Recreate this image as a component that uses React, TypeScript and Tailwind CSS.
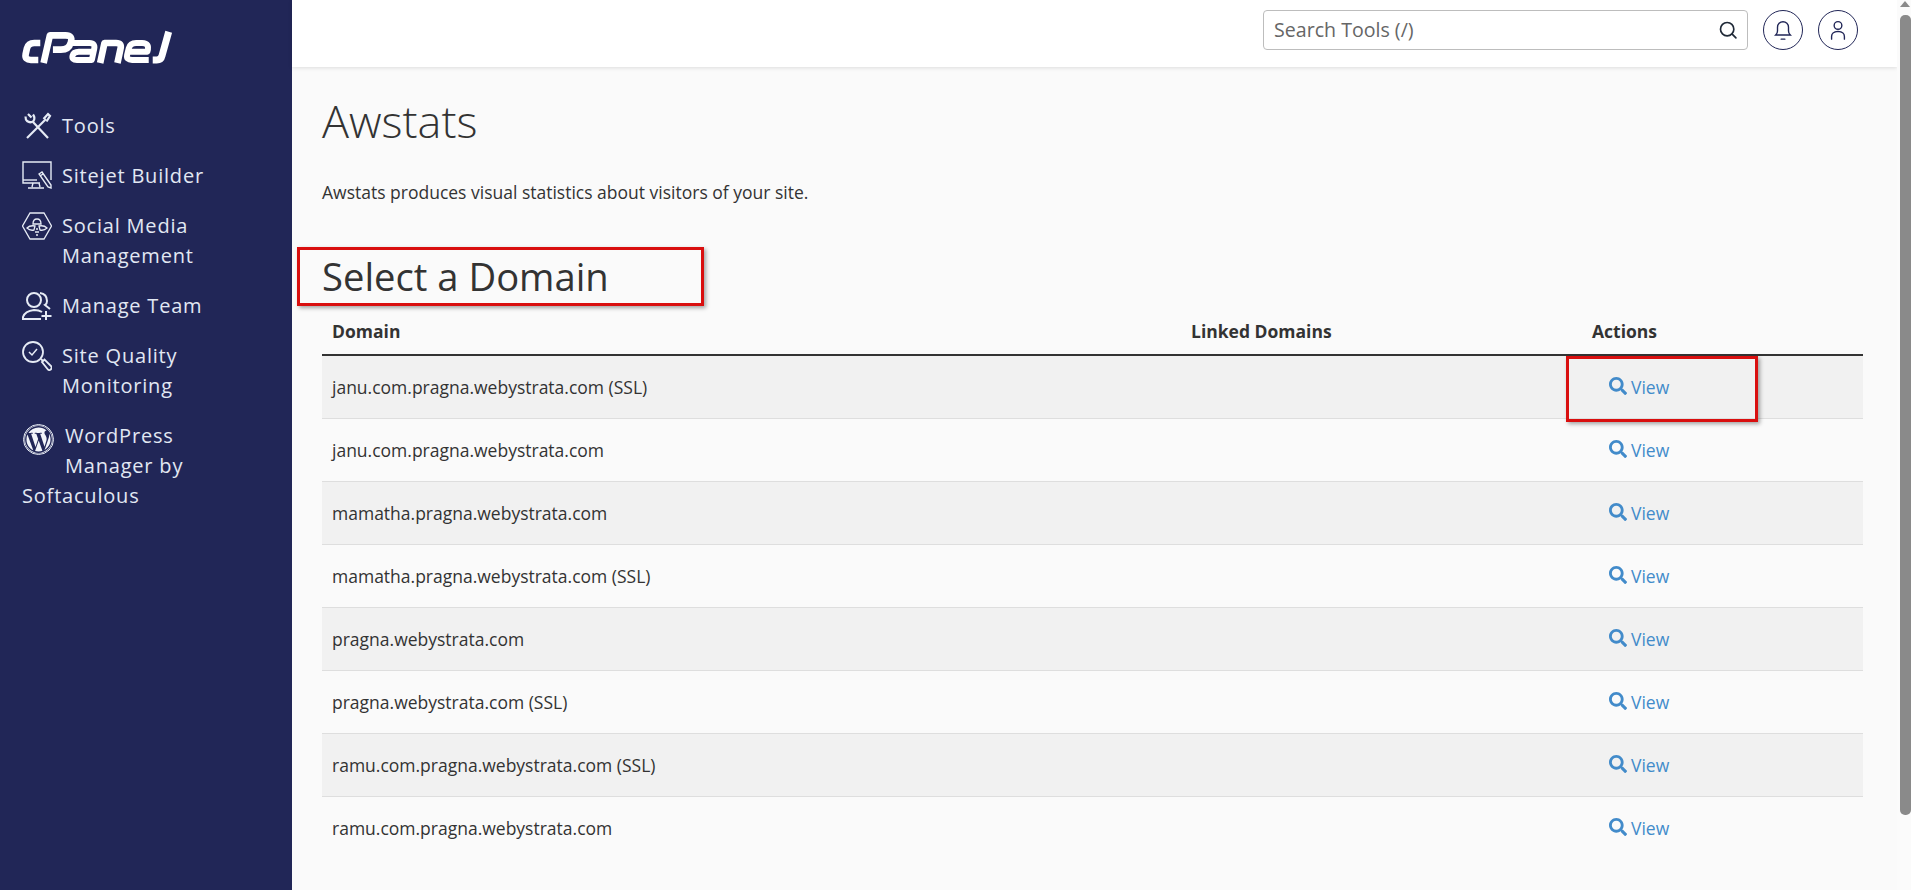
import React from "react";
import { FaSearch, FaWordpress } from "react-icons/fa";

const stroke = "#e6ebf5";

function Logo() {
  return (
    <svg viewBox="0 0 496 135" className="h-[45px] w-[165px] block" fill="none" stroke="#fff" strokeWidth="18" strokeLinejoin="round">
      <path d="M76 54 H58 Q40 54 36 70 L32 88 Q29 105 48 105 H70" strokeWidth="20" />
      <path d="M86 114 L105 31 H152 Q174 31 168 52 Q162 74 138 74 H114" strokeWidth="20" />
      <path d="M174 54 H224 Q242 54 238 72 L231 105 H186 Q170 105 173 92 Q176 80 192 80 H234" />
      <path d="M256 114 L269 54 H304 Q322 54 317 72 L308 114" strokeWidth="20" />
      <path d="M344 80 H398 Q406 54 382 54 H364 Q346 54 342 70 L337 90 Q334 105 352 105 H402" />
      <path d="M462 20 L442 92 Q439 105 426 105 H414" strokeWidth="21" />
    </svg>
  );
}

function ToolsIcon() {
  return (
    <svg viewBox="0 0 30 30" className="w-[30px] h-[30px] block" fill="none" stroke={stroke} strokeWidth="2.2">
      <path d="M5 27 L24 8" />
      <path d="M21.5 8 L26 3 L28 5 L24.5 10.5" />
      <path d="M11 11 L26 27" />
      <path d="M6 3 L9.5 6.5 M11 3.5 Q13.5 7 11.5 10 Q8.5 12.5 5 10 Q3.5 8.5 3.5 5.5" />
    </svg>
  );
}
function SitejetIcon() {
  return (
    <svg viewBox="0 0 30 30" className="w-[30px] h-[30px] block" fill="none" stroke={stroke} strokeWidth="1.4">
      <path d="M18 22 H1 V1 H29 V19" />
      <path d="M1 19 H15" />
      <path d="M11 22 L10 26 M17 22 L18 26 M6 27 H22" />
      <path d="M17 13 L20 11 L29 24 L29 27 L26 26 Z M18 15 L21 13" />
    </svg>
  );
}
function SocialIcon() {
  return (
    <svg viewBox="0 0 30 30" className="w-[30px] h-[30px] block" fill="none" stroke={stroke} strokeWidth="1.3">
      <path d="M8 2 H22 L29.5 15 L22 28 H8 L0.5 15 Z" />
      <path d="M11 13 Q11 8 15 8 Q19 8 19 13 Z" />
      <path d="M5 17 Q8 14 13 15 L12 19 Q8 20 5 17 Z M25 17 Q22 14 17 15 L18 19 Q22 20 25 17 Z" />
      <path d="M14 18 H16 M13 21 H17 M14 24 H16" />
    </svg>
  );
}
function TeamIcon() {
  return (
    <svg viewBox="0 0 30 30" className="w-[30px] h-[30px] block" fill="none" stroke={stroke} strokeWidth="2">
      <circle cx="12" cy="9" r="7" />
      <path d="M18 2 Q25 3 25 10 Q25 13 23 14 L28 18" />
      <path d="M1 29 V26 Q3 20 12 19 Q17 19 20 21 M1 28 H19" />
      <path d="M24 20 V29 M19.5 25 H29.5" />
    </svg>
  );
}
function QualityIcon() {
  return (
    <svg viewBox="0 0 30 30" className="w-[30px] h-[30px] block" fill="none" stroke={stroke} strokeWidth="1.8">
      <circle cx="11" cy="11" r="10" />
      <path d="M7 11 L10 14 L15 8" strokeWidth="1.5" />
      <path d="M19 18 L21 20 M20 21 L22.5 18.5 L29.5 25.5 Q30 28 28 29 Q26.5 29.5 25.5 28 Z" />
    </svg>
  );
}
function BellIcon() {
  return (
    <svg viewBox="0 0 24 24" className="w-[22px] h-[22px]" fill="none" stroke="#212657" strokeWidth="1.5" strokeLinecap="round">
      <path d="M4 17.5 H20 C18.5 16 18 15 18 13 V9 A6 6 0 0 0 6 9 V13 C6 15 5.5 16 4 17.5 Z" />
      <path d="M10 22 H14" />
    </svg>
  );
}
function UserIcon() {
  return (
    <svg viewBox="0 0 24 24" className="w-[22px] h-[22px]" fill="none" stroke="#212657" strokeWidth="1.5" strokeLinecap="round">
      <circle cx="12" cy="7" r="4.2" />
      <path d="M5 22 V19 Q5 14 12 13.5 Q19 14 19 19 V22" />
    </svg>
  );
}
function HeaderSearch() {
  return (
    <svg viewBox="0 0 24 24" className="w-[20px] h-[20px]" fill="none" stroke="#1f2937" strokeWidth="2" strokeLinecap="round">
      <circle cx="11" cy="11" r="8" />
      <path d="M17 17 L21.5 21.5" />
    </svg>
  );
}

const items = [
  { icon: <ToolsIcon />, lines: "Tools" },
  { icon: <SitejetIcon />, lines: "Sitejet Builder" },
  { icon: <SocialIcon />, lines: "Social Media Management" },
  { icon: <TeamIcon />, lines: "Manage Team" },
  { icon: <QualityIcon />, lines: "Site Quality Monitoring" },
];

const rows = [
  "janu.com.pragna.webystrata.com (SSL)",
  "janu.com.pragna.webystrata.com",
  "mamatha.pragna.webystrata.com",
  "mamatha.pragna.webystrata.com (SSL)",
  "pragna.webystrata.com",
  "pragna.webystrata.com (SSL)",
  "ramu.com.pragna.webystrata.com (SSL)",
  "ramu.com.pragna.webystrata.com",
];

export default function App() {
  return (
    <div className="flex h-[890px] w-[1911px] overflow-hidden bg-[#fafafa] font-['Open_Sans',sans-serif] text-[#333]">
      <aside className="w-[292px] shrink-0 bg-[#212657] text-[#e2e8f3] pl-[22px] pr-4">
        <div className="pt-[25px] -ml-[7px]"><Logo /></div>
        <nav className="mt-[41px] text-[20px] leading-[30px] tracking-[0.8px]">
          {items.map((it) => (
            <div key={it.lines} className="flex gap-[10px] pb-[20px] w-[220px]">
              <div className="shrink-0 w-[30px]">{it.icon}</div>
              <span>{it.lines}</span>
            </div>
          ))}
          <div className="w-[220px]">
            <div className="float-left ml-[1px] mr-[11px] mt-[3px] h-[50px]">
              <span className="flex w-[31px] h-[31px] rounded-full border border-[#e6ebf5] items-center justify-center">
                <FaWordpress className="w-[29px] h-[29px] text-[#f2f4f9]" />
              </span>
            </div>
            WordPress Manager by Softaculous
          </div>
        </nav>
      </aside>

      <div className="flex-1 min-w-0 flex flex-col">
        <header className="h-[67px] shrink-0 bg-white shadow-[0_1px_4px_rgba(0,0,0,0.12)] flex items-start justify-end pt-[10px] pr-[39px] gap-[15px]">
          <div className="relative w-[485px] h-[40px]">
            <input
              readOnly
              placeholder="Search Tools (/)"
              className="w-full h-full rounded-[4px] border border-[#bdbdbd] bg-white pl-[10px] pr-10 pb-[2px] text-[19.6px] placeholder:text-[#666] outline-none"
            />
            <span className="absolute right-[10px] top-[10px]"><HeaderSearch /></span>
          </div>
          <div className="w-[40px] h-[40px] rounded-full border border-[#212657] flex items-center justify-center"><BellIcon /></div>
          <div className="w-[40px] h-[40px] rounded-full border border-[#212657] flex items-center justify-center"><UserIcon /></div>
        </header>

        <main className="flex-1 pl-[30px] pr-[34px] relative">
          <h1 className="text-[45px] font-light leading-[56px] mt-[26px] text-[#333]">Awstats</h1>
          <p className="text-[17.5px] leading-[24px] mt-[31px] text-[#333]">Awstats produces visual statistics about visitors of your site.</p>
          <h2 className="text-[38.2px] leading-[50px] mt-[47px] text-[#333]">Select a Domain</h2>

          <table className="mt-[3px] w-[1541px] table-fixed text-[17.5px] border-collapse">
            <thead>
              <tr className="h-[51px] border-b-2 border-[#333]">
                <th className="w-[859px] text-left align-bottom font-bold pl-[10px] pb-[10px]">Domain</th>
                <th className="w-[401px] text-left align-bottom font-bold pl-[10px] pb-[10px]">Linked Domains</th>
                <th className="text-left align-bottom font-bold pl-[10px] pb-[10px]">Actions</th>
              </tr>
            </thead>
            <tbody>
              {rows.map((r, i) => (
                <tr key={r} className={`h-[63px] border-b border-[#dedede] ${i % 2 === 0 ? "bg-[#f1f1f1]" : "bg-[#fafafa]"} last:border-b-0`}>
                  <td className="pl-[10px] pt-[1px]">{r}</td>
                  <td />
                  <td className="pl-[27px] pt-[2px]">
                    <span className="inline-flex items-center gap-[4px] text-[#428bca]">
                      <FaSearch className="w-[18px] h-[18px] -mt-[2px]" />
                      View
                    </span>
                  </td>
                </tr>
              ))}
            </tbody>
          </table>

          <div className="absolute left-[5px] top-[180px] w-[407px] h-[59px] border-[3px] border-[#d90f0f] shadow-[2px_2px_4px_rgba(0,0,0,0.35)]" />
          <div className="absolute left-[1274px] top-[289px] w-[192px] h-[66px] border-[3px] border-[#d90f0f] shadow-[2px_2px_4px_rgba(0,0,0,0.35)]" />
        </main>
      </div>

      <div className="w-[14px] shrink-0 bg-[#fbfbfb] relative">
        <div className="absolute left-[3px] top-[1px] w-0 h-0 border-x-[5px] border-x-transparent border-b-[6px] border-b-[#8a8a8a]" />
        <div className="absolute left-[3px] top-[15px] w-[11px] h-[800px] rounded-[5px] bg-[#8a8a8a]" />
      </div>
    </div>
  );
}
